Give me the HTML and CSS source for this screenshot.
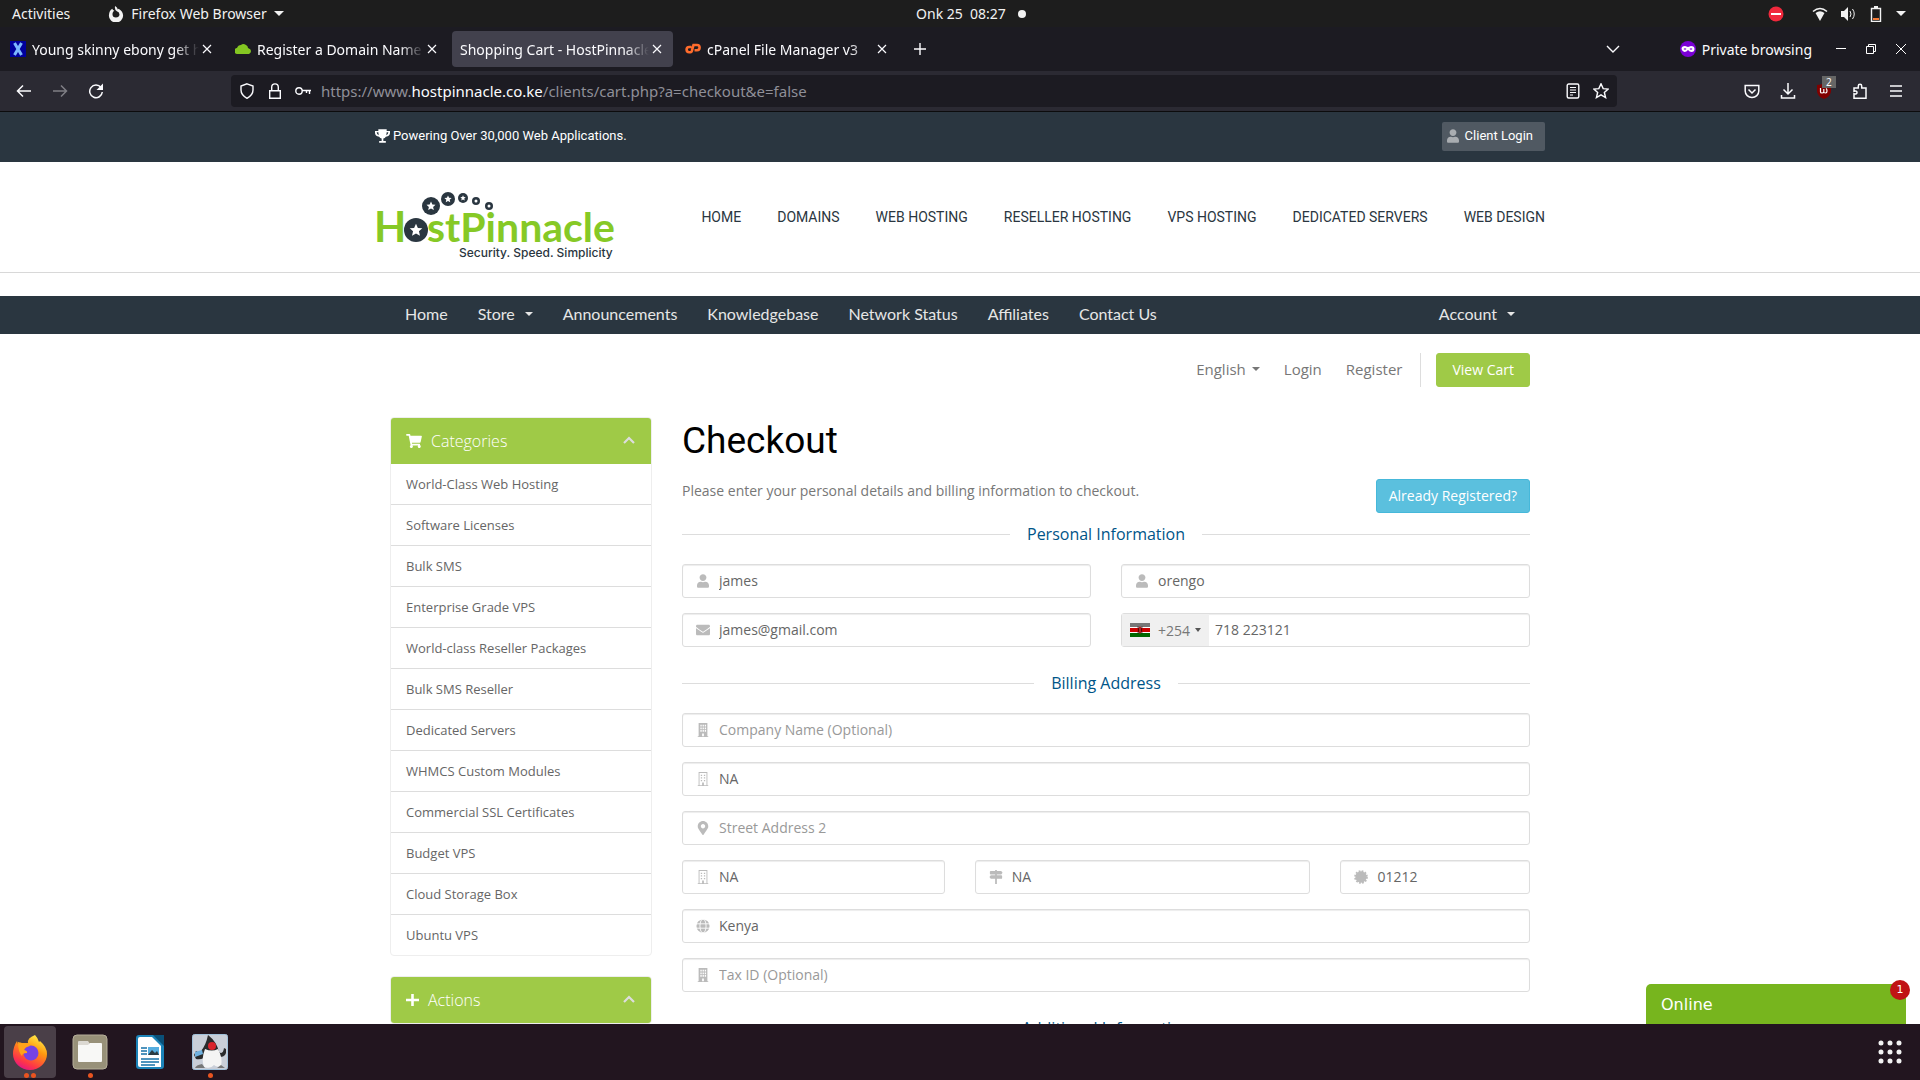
FILE: index.html
```html
<!DOCTYPE html>
<html lang="en">
<head>
<meta charset="utf-8">
<title>Shopping Cart - HostPinnacle</title>
<link rel="stylesheet" href="styles.css">
</head>
<body>
<svg class="defs" aria-hidden="true">
  <symbol id="x" viewBox="0 0 16 16"><path d="M4 4l8 8M12 4l-8 8" fill="none" stroke="currentColor" stroke-width="1.2"/></symbol>
  <symbol id="user" viewBox="0 0 448 512"><path d="M224 256c70.7 0 128-57.3 128-128S294.7 0 224 0 96 57.3 96 128s57.3 128 128 128zm89.6 32h-16.7c-22.2 10.2-46.9 16-72.9 16s-50.6-5.8-72.9-16h-16.7C60.2 288 0 348.2 0 422.4V464c0 26.5 21.5 48 48 48h352c26.5 0 48-21.5 48-48v-41.6c0-74.2-60.2-134.4-134.4-134.4z"/></symbol>
  <symbol id="mail" viewBox="0 0 512 512"><path d="M502.3 190.8c3.9-3.1 9.7-.2 9.7 4.7V400c0 26.5-21.5 48-48 48H48c-26.5 0-48-21.5-48-48V195.6c0-5 5.7-7.8 9.7-4.7 22.4 17.4 52.1 39.5 154.1 113.6 21.1 15.4 56.7 47.8 92.2 47.6 35.7.3 72-32.8 92.3-47.6 102-74.1 131.6-96.3 154-113.7zM256 320c23.2.4 56.6-29.2 73.4-41.4 132.7-96.3 142.8-104.7 173.4-128.7 5.8-4.5 9.2-11.5 9.2-18.9v-19c0-26.5-21.5-48-48-48H48c-26.5 0-48 21.5-48 48v19c0 7.4 3.4 14.3 9.2 18.9 30.6 23.9 40.7 32.4 173.4 128.7 16.8 12.2 50.2 41.8 73.4 41.4z"/></symbol>
  <symbol id="building" viewBox="0 0 14 16"><path fill-rule="evenodd" d="M2 0h10v15h1v1H1v-1h1zM4 2v2h1.500V2zm2.500 0v2H8V2zM9 2v2h1.500V2zM4 5v2h1.500V5zm2.500 0v2H8V5zM9 5v2h1.500V5zM4 8v2h1.500V8zm2.500 0v2H8V8zM9 8v2h1.500V8zM6 12v3h2v-3z"/></symbol>
  <symbol id="building-o" viewBox="0 0 14 16"><path fill-rule="evenodd" d="M2 0h10v15h1v1H1v-1h1zM3 1v14h3v-3h2v3h3V1zM4.500 3v1.500H6V3zM8 3v1.500h1.500V3zM4.500 6v1.500H6V6zM8 6v1.500h1.500V6zM4.500 9v1.500H6V9zM8 9v1.500h1.500V9z"/></symbol>
  <symbol id="pin" viewBox="0 0 384 512"><path d="M172.268 501.67C26.97 291.031 0 269.413 0 192 0 85.961 85.961 0 192 0s192 85.961 192 192c0 77.413-26.97 99.031-172.268 309.67-9.535 13.774-29.93 13.773-39.464 0zM192 272c44.183 0 80-35.817 80-80s-35.817-80-80-80-80 35.817-80 80 35.817 80 80 80z"/></symbol>
  <symbol id="signs" viewBox="0 0 16 16"><path d="M7 0h2v1h5l1.500 2L14 5H2Q1 5 1 4V2Q1 1 2 1h5zM7 5h2v1h5q1 0 1 1v2q0 1-1 1H2L.5 8 2 6h5zM7 10h2v6H7z"/></symbol>
  <symbol id="seal" viewBox="0 0 16 16"><circle cx="8" cy="8" r="6.500"/><circle cx="8" cy="8" r="6.800" fill="none" stroke="currentColor" stroke-width="2" stroke-dasharray="2 1.560"/></symbol>
  <symbol id="globe" viewBox="0 0 16 16"><circle cx="8" cy="8" r="7.500"/><path d="M0 5.500h16M0 10.500h16" stroke="#fff" fill="none"/><ellipse cx="8" cy="8" rx="3.500" ry="8" fill="none" stroke="#fff"/></symbol>
  <symbol id="cart" viewBox="0 0 576 512"><path d="M528.12 301.319l47.273-208C578.806 78.301 567.391 64 551.99 64H159.208l-9.166-44.81C147.758 8.021 137.93 0 126.529 0H24C10.745 0 0 10.745 0 24v16c0 13.255 10.745 24 24 24h69.883l70.248 343.435C147.325 417.1 136 435.222 136 456c0 30.928 25.072 56 56 56s56-25.072 56-56c0-15.674-6.447-29.835-16.824-40h209.647C430.447 426.165 424 440.326 424 456c0 30.928 25.072 56 56 56s56-25.072 56-56c0-22.172-12.888-41.332-31.579-50.405l5.517-24.276c3.413-15.018-8.002-29.319-23.403-29.319H218.117l-6.545-32h293.145c11.206 0 20.92-7.754 23.403-18.681z"/></symbol>
  <symbol id="up" viewBox="0 0 14 14"><path d="M2 9l5-5 5 5" fill="none" stroke="currentColor" stroke-width="2.200"/></symbol>
  <symbol id="star" viewBox="0 0 20 20"><path d="M10 1l2.700 6 6.300.6-4.800 4.200 1.500 6.400L10 14.900l-5.700 3.300 1.500-6.400L1 7.600 7.300 7z"/></symbol>
</svg>

<header class="topbar">
  <div class="top-left">
    <button class="plain">Activities</button>
    <button class="plain appmenu">
      <svg width="16" height="16" viewBox="0 0 16 18"><path fill="#f2f2f2" d="M7 0q3 2 3 4l1-1q5 3 5 8a8 7.500 0 0 1-16 0Q0 5 4 3q0 2 2 2-2 2-2 4 0 4 4 4 3 0 4-3 0-3-3-4Q6 4 7 0z"/></svg>
      Firefox Web Browser <i class="caret"></i></button>
  </div>
  <div class="clock">Onk 25&nbsp; 08:27 <i class="dot"></i></div>
  <div class="top-right">
    <svg class="nodisturb" width="16" height="16" viewBox="0 0 16 16"><circle cx="8" cy="8" r="7.500" fill="#f0283c"/><path d="M3 7h10v2H3z" fill="#fff"/></svg>
    <svg width="16" height="16" viewBox="0 0 16 16"><path fill="#f2f2f2" d="M8 15L3.500 7Q8 3.500 12.500 7z"/><path d="M1 5.500Q8-.5 15 5.500" fill="none" stroke="#f2f2f2" stroke-width="1.600"/></svg>
    <svg width="16" height="16" viewBox="0 0 16 16"><path fill="#f2f2f2" d="M1 5h3l4-4v14l-4-4H1z"/><path d="M10 5q2 3 0 6M12.500 3q3.500 5 0 10" fill="none" stroke="#f2f2f2"/></svg>
    <svg width="16" height="16" viewBox="0 0 16 16"><path d="M3.500 2.500h9v13h-9z" fill="none" stroke="#f2f2f2" stroke-width="1.400"/><path d="M6 0h4v2H6z" fill="#f2f2f2"/><path d="M5 12h6v2H5z" fill="#f47a35"/></svg>
    <i class="caret"></i>
  </div>
</header>

<div class="tabbar">
  <nav class="tabs">
    <div class="tab"><svg width="16" height="16" viewBox="0 0 16 16"><path fill="#00009c" d="M0 0h16v16H0z"/><path d="M4.500 2l7 12M11.500 2l-7 12" stroke="#7cb7ff" stroke-width="3"/></svg><span class="tab-title">Young skinny ebony get h</span><button class="close" aria-label="Close tab"><svg width="16" height="16"><use href="#x"/></svg></button></div>
    <div class="tab"><svg width="16" height="16" viewBox="0 0 16 16"><path fill="#84c622" d="M3 13a3 3 0 0 1-1-6q1-3 4-3 2-2 5 0 2 1 2 3 3 1 3 3t-2 3z"/></svg><span class="tab-title">Register a Domain Name</span><button class="close" aria-label="Close tab"><svg width="16" height="16"><use href="#x"/></svg></button></div>
    <div class="tab active"><span class="tab-title">Shopping Cart - HostPinnacle</span><button class="close" aria-label="Close tab"><svg width="16" height="16"><use href="#x"/></svg></button></div>
    <div class="tab"><svg width="16" height="16" viewBox="0 0 16 16"><path d="M6.500 6H4.200a2.600 2.600 0 0 0 0 5.200h1.300q1 0 1.300-1L8.500 4H12a2.600 2.600 0 0 1 0 5.200H9.500" fill="none" stroke="#ff6c2c" stroke-width="2.600"/></svg><span class="tab-title">cPanel File Manager v3</span><button class="close" aria-label="Close tab"><svg width="16" height="16"><use href="#x"/></svg></button></div>
    <button class="plain newtab" aria-label="New tab"><svg width="16" height="16" viewBox="0 0 16 16"><path d="M2 8h12M8 2v12" stroke="#fbfbfe" stroke-width="1.400"/></svg></button>
  </nav>
  <div class="window-tools">
    <button class="plain alltabs" aria-label="List tabs"><svg width="16" height="16" viewBox="0 0 16 16"><path d="M2 5l6 6 6-6" fill="none" stroke="#fbfbfe" stroke-width="1.400"/></svg></button>
    <span class="private"><svg width="16" height="16" viewBox="0 0 16 16"><circle cx="8" cy="8" r="8" fill="#7a00d6"/><path d="M1.500 8Q1.500 5 5 5l3 1 3-1q3.500 0 3.500 3t-3 3q-2 0-3.500-2Q6.500 11 4.500 11t-3-3z" fill="#fff"/><path d="M3.500 8q1.500-1.500 3 0-1.500 1.500-3 0zM9.500 8q1.500-1.500 3 0-1.500 1.500-3 0z" fill="#7a00d6"/></svg>Private browsing</span>
    <button class="plain" aria-label="Minimize"><svg width="14" height="14" viewBox="0 0 14 14"><path d="M2 6.500h10" stroke="#fff"/></svg></button>
    <button class="plain" aria-label="Restore"><svg width="14" height="14" viewBox="0 0 14 14"><path d="M2.500 4.500h7v7h-7zM4.500 4.500v-2h7v7h-2" fill="none" stroke="#fff"/></svg></button>
    <button class="plain" aria-label="Close"><svg width="14" height="14" viewBox="0 0 14 14"><path d="M2 2l10 10M12 2L2 12" stroke="#fff"/></svg></button>
  </div>
</div>

<div class="toolbar">
  <div class="history">
    <button class="plain" aria-label="Back"><svg width="16" height="16" viewBox="0 0 16 16"><path d="M15 8H2M7 2.500L1.500 8 7 13.500" fill="none" stroke="#fbfbfe" stroke-width="1.500"/></svg></button>
    <button class="plain dim" aria-label="Forward"><svg width="16" height="16" viewBox="0 0 16 16"><path d="M1 8h13M9 2.500L14.500 8 9 13.500" fill="none" stroke="#fbfbfe" stroke-width="1.500"/></svg></button>
    <button class="plain" aria-label="Reload"><svg width="16" height="16" viewBox="0 0 16 16"><path d="M13 4.500A6.300 6.300 0 1 0 14.300 9" fill="none" stroke="#fbfbfe" stroke-width="1.500"/><path d="M15 .5V7H8.500z" fill="#fbfbfe"/></svg></button>
  </div>
  <div class="urlbar">
    <svg width="16" height="16" viewBox="0 0 16 16"><path d="M8 .8l6 2.200v4q0 5-6 8.300Q2 12 2 7V3z" fill="none" stroke="#fbfbfe" stroke-width="1.400"/></svg>
    <svg width="16" height="16" viewBox="0 0 16 16"><path d="M2.700 7.700h10.600v7.500H2.700zM4.700 7.500V4.200a3.300 3.300 0 0 1 6.600 0v3.300" fill="none" stroke="#fbfbfe" stroke-width="1.400"/></svg>
    <svg width="16" height="16" viewBox="0 0 16 16"><circle cx="4" cy="8" r="3.200" fill="none" stroke="#fbfbfe" stroke-width="1.400"/><path d="M7 7.500h9M14.500 8v3M11.500 8v2" stroke="#fbfbfe" stroke-width="1.400"/></svg>
    <div class="url" role="textbox" aria-label="Address">https://www.<b>hostpinnacle.co.ke</b>/clients/cart.php?a=checkout&amp;e=false</div>
    <svg width="16" height="16" viewBox="0 0 16 16"><rect x="2.200" y="1" width="11.600" height="14" rx="1.500" fill="none" stroke="#fbfbfe" stroke-width="1.400"/><path d="M5 4.500h6M5 7h6M5 9.500h6M5 12h3" stroke="#fbfbfe"/></svg>
    <svg width="16" height="16" viewBox="0 0 20 20"><use href="#star" fill="none" stroke="#fbfbfe" stroke-width="1.800"/></svg>
  </div>
  <div class="tools">
    <button class="plain" aria-label="Pocket"><svg width="16" height="16" viewBox="0 0 16 16"><path d="M1.200 2.500h13.600V8a6.800 6.500 0 0 1-13.600 0zM4.500 6.500L8 10l3.500-3.500" fill="none" stroke="#fbfbfe" stroke-width="1.500"/></svg></button>
    <button class="plain" aria-label="Downloads"><svg width="16" height="16" viewBox="0 0 16 16"><path d="M8 0v11M3.500 6.500L8 11l4.500-4.500M1.500 12v3h13v-3" fill="none" stroke="#fbfbfe" stroke-width="1.500"/></svg></button>
    <button class="plain blocker" aria-label="Content blocker"><svg width="16" height="16" viewBox="0 0 16 16"><path fill="#800000" d="M8 0q3 2 7 2v6q0 5-7 8-7-3-7-8V2q4 0 7-2z"/><path d="M4.500 5v4q0 1 1.500 1t1.800-1V6v3q.2 1 1.700 1t1.500-2-1-2.500" fill="none" stroke="#fff" stroke-width="1.200"/></svg><span class="count">2</span></button>
    <button class="plain" aria-label="Extensions"><svg width="16" height="16" viewBox="0 0 16 16"><path d="M2 15.200V10.700q3 .8 3-1.200t-3-1.200V5h4.300V3a1.700 1.700 0 0 1 3.400 0v2H14v10.200z" fill="none" stroke="#fbfbfe" stroke-width="1.500"/></svg></button>
    <button class="plain" aria-label="Menu"><svg width="16" height="16" viewBox="0 0 16 16"><path d="M2 3h12M2 8h12M2 13h12" stroke="#fbfbfe" stroke-width="1.500"/></svg></button>
  </div>
</div>

<div class="page">
  <div class="strip">
    <div class="container strip-in">
      <span class="power"><svg width="15" height="14" viewBox="0 0 18 16"><path d="M4 0h10v2h4v2q0 4-5 5-1 2-3 2v3h3v2H5v-2h3v-3Q6 11 5 9 0 8 0 4V2h4zM2 3.500Q2 6 4.500 7L4 3.500zm12 0L13.500 7Q16 6 16 3.500z" fill="#fff"/></svg>Powering Over 30,000 Web Applications.</span>
      <button class="client"><svg width="12" height="14"><use href="#user"/></svg>Client Login</button>
    </div>
  </div>
  <div class="masthead">
    <div class="container mast-in">
      <a href="#" class="logo" aria-label="HostPinnacle"><svg width="240" height="72" viewBox="0 0 240 72">
        <g fill="#86c926" font-family="Lato, sans-serif" font-weight="700" font-size="42"><text x="-1" y="53">H</text><text x="52" y="53" font-size="41">stPinnacle</text></g>
        <g fill="#2a3640"><circle cx="41" cy="41" r="12"/><circle cx="56" cy="17" r="9"/><circle cx="73" cy="10" r="7"/><circle cx="88" cy="9" r="5"/><circle cx="101" cy="12" r="4"/><circle cx="114" cy="17" r="4"/></g>
        <g fill="#fff"><use href="#star" x="34" y="34" width="14" height="14"/><use href="#star" x="51" y="12" width="10" height="10"/><use href="#star" x="69" y="6" width="8" height="8"/><use href="#star" x="85" y="6" width="6" height="6"/><circle cx="101" cy="12" r="1.500"/><circle cx="114" cy="17" r="1.500"/></g>
        <text x="84" y="68" font-family="Inter, sans-serif" font-weight="500" font-size="12" fill="#2a3640">Security. Speed. Simplicity</text></svg></a>
      <nav class="mast-nav"><a href="#">HOME</a><a href="#">DOMAINS</a><a href="#">WEB HOSTING</a><a href="#">RESELLER HOSTING</a><a href="#">VPS HOSTING</a><a href="#">DEDICATED SERVERS</a><a href="#">WEB DESIGN</a></nav>
    </div>
  </div>
  <nav class="menu">
    <div class="container menu-in">
      <a href="#">Home</a><a href="#">Store<i class="caret"></i></a><a href="#">Announcements</a><a href="#">Knowledgebase</a><a href="#">Network Status</a><a href="#">Affiliates</a><a href="#">Contact Us</a>
      <a href="#" class="account">Account<i class="caret"></i></a>
    </div>
  </nav>
  <div class="container body">
    <div class="userbar">
      <a href="#">English<i class="caret"></i></a><a href="#">Login</a><a href="#">Register</a>
      <span class="cartbox"><button class="btn green">View Cart</button></span>
    </div>
    <div class="columns">
      <aside class="side">
        <section class="panel">
          <h2><svg width="16" height="14"><use href="#cart"/></svg>Categories<svg class="fold" width="14" height="14"><use href="#up"/></svg></h2>
          <a href="#">World-Class Web Hosting</a><a href="#">Software Licenses</a><a href="#">Bulk SMS</a><a href="#">Enterprise Grade VPS</a><a href="#">World-class Reseller Packages</a><a href="#">Bulk SMS Reseller</a><a href="#">Dedicated Servers</a><a href="#">WHMCS Custom Modules</a><a href="#">Commercial SSL Certificates</a><a href="#">Budget VPS</a><a href="#">Cloud Storage Box</a><a href="#">Ubuntu VPS</a>
        </section>
        <section class="panel">
          <h2><svg width="13" height="14" viewBox="0 0 13 14"><path d="M6.500 1v12M0 7h13" stroke="#fff" stroke-width="2.600"/></svg>Actions<svg class="fold" width="14" height="14"><use href="#up"/></svg></h2>
        </section>
      </aside>
      <main class="main">
        <h1>Checkout</h1>
        <div class="intro"><p>Please enter your personal details and billing information to checkout.</p><button class="btn blue">Already Registered?</button></div>
        <form>
          <h3><span>Personal Information</span></h3>
          <div class="row">
            <div class="col half"><div class="field"><label for="first" aria-label="First Name"><svg width="12" height="14"><use href="#user"/></svg></label><input id="first" value="james"></div></div>
            <div class="col half"><div class="field"><label for="last" aria-label="Last Name"><svg width="12" height="14"><use href="#user"/></svg></label><input id="last" value="orengo"></div></div>
            <div class="col half"><div class="field"><label for="email" aria-label="Email Address"><svg width="14" height="14"><use href="#mail"/></svg></label><input id="email" type="email" value="james@gmail.com"></div></div>
            <div class="col half"><div class="field phone"><button type="button" class="dial" aria-label="Country code +254"><svg width="20" height="14" viewBox="0 0 20 14"><path fill="#fff" d="M0 0h20v14H0z"/><path d="M0 0h20v4H0z"/><path fill="#c00" d="M0 5h20v4H0z"/><path fill="#006800" d="M0 10h20v4H0z"/><ellipse cx="10" cy="7" rx="1.500" ry="3.500" fill="#a22"/><path d="M8 3.500q1 3.500 0 7M12 3.500q-1 3.500 0 7" fill="none" stroke="#300" stroke-width=".8"/></svg>+254<i class="caret"></i></button><input aria-label="Phone Number" type="tel" value="718 223121"></div></div>
          </div>
          <h3><span>Billing Address</span></h3>
          <div class="row">
            <div class="col"><div class="field"><label for="company" aria-label="Company Name"><svg width="14" height="14"><use href="#building"/></svg></label><input id="company" placeholder="Company Name (Optional)"></div></div>
            <div class="col"><div class="field"><label for="street" aria-label="Street Address"><svg width="14" height="14"><use href="#building-o"/></svg></label><input id="street" value="NA"></div></div>
            <div class="col"><div class="field"><label for="street2" aria-label="Street Address 2"><svg width="14" height="14"><use href="#pin"/></svg></label><input id="street2" placeholder="Street Address 2"></div></div>
            <div class="col third"><div class="field"><label for="city" aria-label="City"><svg width="14" height="14"><use href="#building-o"/></svg></label><input id="city" value="NA"></div></div>
            <div class="col wide"><div class="field"><label for="state" aria-label="State"><svg width="14" height="14"><use href="#signs"/></svg></label><input id="state" value="NA"></div></div>
            <div class="col quarter"><div class="field"><label for="code" aria-label="Postcode"><svg width="14" height="14"><use href="#seal"/></svg></label><input id="code" value="01212"></div></div>
            <div class="col"><div class="field"><label for="country" aria-label="Country"><svg width="14" height="14"><use href="#globe"/></svg></label><select id="country"><option>Kenya</option></select></div></div>
            <div class="col"><div class="field"><label for="tax" aria-label="Tax ID"><svg width="14" height="14"><use href="#building"/></svg></label><input id="tax" placeholder="Tax ID (Optional)"></div></div>
          </div>
          <h3><span>Additional Information</span></h3>
        </form>
      </main>
    </div>
  </div>
  <button class="chat">Online<span class="unread">1</span></button>
</div>

<footer class="dock">
  <button class="app current" aria-label="Firefox"><svg width="36" height="36" viewBox="0 0 36 36"><defs><linearGradient id="fx" x1=".8" y1="0" x2=".3" y2="1"><stop offset="0" stop-color="#fff44f"/><stop offset=".4" stop-color="#ff980e"/><stop offset=".8" stop-color="#ff3647"/><stop offset="1" stop-color="#e31587"/></linearGradient></defs><path fill="url(#fx)" d="M23 1q3 3 4 7l1-1q7 6 7 13A17 16 0 0 1 1 20Q1 13 5 7l1 3q2-2 4-1l6 0q-1-5 7-8z"/><circle cx="19" cy="19" r="7.500" fill="#7542e5"/><path fill="#ffa21a" d="M6 8q6 2 9 1l3 3q-6 1-6 4 4 1 3 3-5 0-5 3-4-4-4-14z"/></svg><span class="dots"><i></i><i></i></span></button>
  <button class="app" aria-label="Files"><svg width="36" height="36" viewBox="0 0 36 36"><rect x="1" y="1" width="34" height="34" rx="4" fill="#989179" stroke="#b5ae9a"/><path fill="#dcd9d2" d="M6 8q0-1 1-1h9l2 3v4H6z"/><path fill="#f8f8f6" d="M6 11h10l2-2h11q1 0 1 1v17q0 1-1 1H7q-1 0-1-1z"/></svg><span class="dots"><i></i></span></button>
  <button class="app" aria-label="Writer"><svg width="36" height="36" viewBox="0 0 36 36"><path fill="#1b83b8" d="M7 1h22q3 0 3 3v28q0 3-3 3H7q-3 0-3-3V4q0-3 3-3z"/><path fill="#fff" d="M8 3h12l9 9v21H8q-2 0-2-2V5q0-2 2-2z"/><path fill="#0a5078" d="M21 1h11v11z"/><path d="M9 14h6M9 17h6M9 20h6M9 25h18M9 28h18M9 31h14" stroke="#1671a8" stroke-width="1.500"/><path fill="#56aee0" d="M16 13h11v8H16z"/><path fill="#2c3b42" d="M16 21l4-5 3 3 2-2 2 4z"/></svg></button>
  <button class="app" aria-label="Java application"><svg width="36" height="36" viewBox="0 0 36 36"><rect x=".5" y=".5" width="35" height="35" rx="2" fill="#c9ced8" stroke="#9fc0da"/><path fill="#292a2c" d="M16 1q9 7 11 17 4 3 5-4l2 1q1 8-6 8L12 24q-4 2-8 1l-2-4 2-4q2 2 5 0 5-6 7-16z"/><path fill="#f4f4f4" d="M13 15q7 3 13 0 5 9 3 17-4 2-7-1-3 4-10 2-3-8 1-18z"/><path fill="#777" d="M10 30q-6 1-7 4h10zM29 31l4 3h-8z"/><circle cx="20" cy="12" r="4" fill="#d8232c"/><path fill="#6fb0de" d="M3 18l7-2 1 4-8 3z"/></svg><span class="dots"><i></i></span></button>
  <button class="app grid" aria-label="Show applications"><svg width="24" height="24" viewBox="0 0 24 24"><path d="M3 3h0M12 3h0M21 3h0M3 12h0M12 12h0M21 12h0M3 21h0M12 21h0M21 21h0" stroke="#f2f2f2" stroke-width="5" stroke-linecap="round"/></svg></button>
</footer>
</body>
</html>
```
FILE: styles.css
```css
* { box-sizing: border-box; }
body {
  margin: 0;
  height: 100vh;
  display: flex;
  flex-direction: column;
  overflow: hidden;
  font-family: "Open Sans", sans-serif;
  font-size: 14px;
  color: #666;
}
a { color: inherit; text-decoration: none; }
button, input, select { font: inherit; color: inherit; }
button { cursor: pointer; }
svg { display: block; flex: none; fill: currentColor; }
.defs { position: absolute; width: 0; height: 0; }
.plain, .close { border: 0; padding: 0; background: none; }
.caret {
  display: inline-block;
  border: 4px solid transparent;
  border-top-color: currentColor;
  border-bottom: 0;
}

/* Desktop top bar */
.topbar, .tabbar, .toolbar { font-family: "Noto Sans", sans-serif; font-size: 14px; flex: none; }
.topbar {
  height: 27px;
  display: grid;
  grid-template-columns: 1fr auto 1fr;
  align-items: center;
  background: #1d1d1d;
  color: #f2f2f2;
}
.top-left, .top-right, .clock, .appmenu { display: flex; align-items: center; }
.top-left { padding-left: 12px; gap: 38px; }
.appmenu { gap: 7px; }
.topbar .caret { border-width: 5px 5px 0; }
.clock { gap: 12px; padding-left: 22px; }
.dot { width: 8px; height: 8px; border-radius: 50%; background: #f2f2f2; }
.top-right { justify-content: flex-end; gap: 12px; padding-right: 14px; }
.nodisturb { margin-right: 16px; }

/* Browser tabs */
.tabbar {
  height: 44px;
  display: flex;
  align-items: center;
  justify-content: space-between;
  background: #1c1b22;
  color: #fbfbfe;
}
.tabs { display: flex; align-items: center; gap: 4px; padding-left: 2px; }
.tab {
  width: 221px;
  height: 36px;
  padding: 0 8px;
  display: flex;
  align-items: center;
  border-radius: 4px;
}
.tab.active { background: #42414d; }
.tab-title {
  flex: 1;
  margin-left: 6px;
  overflow: hidden;
  white-space: nowrap;
  mask-image: linear-gradient(to left, transparent, #000 24px);
}
.tab.active .tab-title { margin-left: 0; }
.newtab { margin-left: 10px; }
.window-tools { display: flex; align-items: center; gap: 16px; padding-right: 12px; }
.alltabs { margin-right: 43px; }
.private { display: flex; align-items: center; gap: 6px; margin-right: 6px; }

/* Browser toolbar */
.toolbar {
  height: 41px;
  display: flex;
  align-items: center;
  padding: 0 16px;
  background: #2b2a33;
  border-bottom: 1px solid #0c0c0d;
  color: #fbfbfe;
}
.history, .tools { display: flex; gap: 20px; }
.dim { opacity: .4; }
.urlbar {
  flex: 1;
  height: 32px;
  margin: 0 127px;
  padding: 0 8px;
  display: flex;
  align-items: center;
  gap: 12px;
  border-radius: 4px;
  background: #1c1b22;
}
.url { flex: 1; margin-left: -2px; font-size: 15px; color: #8f8f98; }
.url b { font-weight: 400; color: #fbfbfe; }
.blocker { position: relative; }
.count {
  position: absolute;
  left: 6px;
  top: -7px;
  padding: 0 4px;
  background: #666;
  font-size: 10px;
  line-height: 12px;
}

/* Website */
.page { flex: 1; min-height: 0; overflow: hidden; position: relative; background: #fff; }
.container { max-width: 1170px; margin: 0 auto; }
.strip { height: 50px; background: #2a3640; color: #fff; font: 13px Roboto, sans-serif; }
.strip-in { display: flex; justify-content: space-between; padding-top: 10px; }
.power { display: flex; align-items: center; gap: 3px; height: 27px; }
.client {
  height: 29px;
  display: flex;
  align-items: center;
  gap: 6px;
  padding: 0 12px 2px 5px;
  border: 0;
  border-radius: 2px;
  background: #505962;
}
.client svg { color: #a9adb1; }
.masthead { height: 111px; border-bottom: 1px solid #d8d8d8; }
.mast-in { display: flex; justify-content: space-between; padding-top: 27px; }
.mast-nav {
  display: flex;
  gap: 36px;
  padding-top: 19px;
  font: 14px/18px Roboto, sans-serif;
  color: #2a3640;
}
.menu { margin-top: 23px; background: #2a3640; color: #e6e6e6; font: 16px/36px Lato, sans-serif; }
.menu-in { display: flex; padding: 0 15px; }
.menu-in a { display: flex; align-items: center; padding: 0 15px 2px; }
.menu-in .caret { margin-left: 10px; }
.account { margin-left: auto; }
.body { padding: 19px 15px 0; }
.userbar { display: flex; justify-content: flex-end; align-items: center; font-size: 15px; color: #777; }
.userbar a { display: flex; align-items: center; gap: 6px; margin-right: 24px; padding-bottom: 3px; }
.userbar a:nth-child(3) { margin-right: 18px; }
.cartbox { border-left: 1px solid #ddd; padding-left: 15px; }
.btn {
  height: 34px;
  padding: 0 12px 2px;
  border: 1px solid;
  border-radius: 3px;
  color: #fff;
  font-size: 14px;
}
.green { background: #9fca47; border-color: #9fca47; padding: 0 15px 2px; }
.blue { background: #5bc0de; border-color: #46b8da; }
.columns { display: flex; gap: 30px; padding-top: 30px; }
.side { flex: none; width: 262px; }
.panel {
  margin-bottom: 20px;
  border: 1px solid #eee;
  border-radius: 4px;
  overflow: hidden;
  font-size: 13px;
}
.panel h2 {
  margin: 0;
  height: 46px;
  padding: 0 15px;
  display: flex;
  align-items: center;
  gap: 9px;
  background: #9fca47;
  color: #fff;
  font-size: 16px;
  font-weight: 300;
}
.fold { margin-left: auto; color: #ddd; }
.panel a { display: block; padding: 0 15px; line-height: 40px; border-bottom: 1px solid #ddd; }
.panel a:last-child { border-bottom: 0; }
.main { flex: 1; min-width: 0; }
h1 { margin: 0; padding-top: 4px; font: 37px/40px Roboto, sans-serif; color: #000; }
.intro { display: flex; justify-content: space-between; padding-top: 18px; }
.intro p { margin: 0; line-height: 24px; color: #777; }
h3 {
  display: flex;
  align-items: center;
  gap: 17px;
  margin: 10px 0 19px;
  font-size: 16px;
  font-weight: 400;
  line-height: 22px;
  color: #058;
}
h3::before, h3::after { content: ""; flex: 1; border-top: 1px solid #ddd; }
.row { display: flex; flex-wrap: wrap; row-gap: 15px; margin: 0 -15px; }
.row + h3 { margin-top: 25px; }
.col { width: 100%; padding: 0 15px; }
.half { width: 50%; }
.third { width: 33.333%; }
.wide { width: 41.666%; }
.quarter { width: 25%; }
.field {
  display: flex;
  height: 34px;
  padding-left: 12px;
  border: 1px solid #ddd;
  border-radius: 3px;
  box-shadow: inset 0 1px 1px rgba(0, 0, 0, .075);
}
.field label { width: 16px; display: flex; align-items: center; justify-content: center; color: #bbb; }
.field input, .field select {
  flex: 1;
  min-width: 0;
  margin-left: 8px;
  padding: 0 0 1px;
  border: 0;
  outline: 0;
  background: none;
  appearance: none;
  color: #666;
}
.field input::placeholder { color: #999; }
.field.phone { padding: 0; }
.field.phone input { margin-left: 6px; }
.dial {
  width: 87px;
  display: flex;
  align-items: center;
  gap: 8px;
  padding: 0 8px;
  border: 0;
  background: #f0f0f0;
  color: #777;
}
.dial .caret { border-width: 4px 3px 0; margin-left: -3px; color: #555; }
.chat {
  position: absolute;
  right: 14px;
  bottom: 0;
  width: 260px;
  height: 40px;
  padding: 0 15px;
  border: 0;
  border-radius: 5px 5px 0 0;
  background: #77b51e;
  color: #fff;
  font: 16px "DejaVu Sans", sans-serif;
  text-align: left;
}
.unread {
  position: absolute;
  right: -4px;
  top: -4px;
  width: 20px;
  border-radius: 50%;
  background: #c01414;
  font-size: 11px;
  line-height: 20px;
  text-align: center;
}

/* Dock */
.dock { flex: none; height: 56px; display: flex; align-items: center; gap: 8px; padding: 0 4px; background: #22151f; }
.app {
  position: relative;
  width: 52px;
  height: 52px;
  display: flex;
  align-items: center;
  justify-content: center;
  padding: 0;
  border: 0;
  border-radius: 4px;
  background: none;
}
.current { background: #4a3f48; }
.grid { margin-left: auto; }
.dots { position: absolute; left: 0; right: 0; bottom: 0; display: flex; justify-content: center; gap: 2px; }
.dots i { width: 5px; height: 5px; border-radius: 50%; background: #e95420; }
```
